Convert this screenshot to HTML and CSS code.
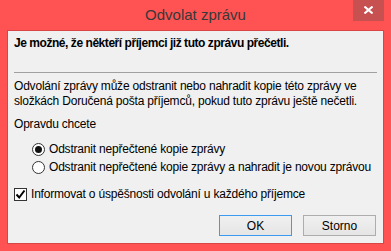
FILE: index.html
```html
<!DOCTYPE html>
<html lang="cs">
<head>
    <meta charset="UTF-8">
    <title>Odvolat zprávu</title>
    <link rel="stylesheet" href="styles.css">
</head>
<body>
    <div class="window">
        <div class="titlebar">
            <span></span>
            <span class="title">Odvolat zprávu</span>
            <button class="close" aria-label="Zavřít">
                <svg width="9" height="8" viewBox="0 0 9 8">
                    <path d="M0.5 0.5 L8.5 7.5 M8.5 0.5 L0.5 7.5" stroke="#fff" stroke-width="2"/>
                </svg>
            </button>
        </div>
        <div class="content">
            <p class="warning">Je možné, že někteří příjemci již tuto zprávu přečetli.</p>
            <hr class="separator">
            <p class="info">Odvolání zprávy může odstranit nebo nahradit kopie této zprávy ve<br>složkách Doručená pošta příjemců, pokud tuto zprávu ještě nečetli.</p>
            <p class="question">Opravdu chcete</p>

            <div class="options">
                <label class="option"><span class="radio checked"></span>Odstranit nepřečtené kopie zprávy</label>
                <label class="option"><span class="radio"></span>Odstranit nepřečtené kopie zprávy a nahradit je novou zprávou</label>
            </div>

            <label class="check-row">
                <span class="checkbox">
                    <svg width="11" height="11" viewBox="0 0 11 11">
                        <path d="M1.5 5.5 L4.2 8.5 L9.5 1.5" fill="none" stroke="#000" stroke-width="2"/>
                    </svg>
                </span>
                Informovat o úspěšnosti odvolání u každého příjemce
            </label>

            <div class="buttons">
                <button class="btn default">OK</button>
                <button class="btn">Storno</button>
            </div>
        </div>
    </div>
</body>
</html>
```

FILE: styles.css
```css
* {
    margin: 0;
    padding: 0;
    box-sizing: border-box;
}
body {
    font-family: 'Liberation Sans', Arial, sans-serif;
    font-size: 12px;
    letter-spacing: -0.2px;
    color: #000;
    background: #fff;
}
.window {
    width: 391px;
    height: 251px;
    overflow: hidden;
    background: #ff5353;
    padding: 0 7px 7px 7px;
    display: flex;
    flex-direction: column;
}
.titlebar {
    height: 30px;
    flex: none;
    display: grid;
    grid-template-columns: 1fr auto 1fr;
    align-items: start;
}
.title {
    font-size: 15px;
    letter-spacing: 0;
    color: #383838;
    line-height: 30px;
}
.close {
    justify-self: end;
    width: 31px;
    height: 21px;
    border: none;
    background: #c75050;
    display: flex;
    align-items: center;
    justify-content: center;
    padding-bottom: 2px;
}
.content {
    flex: 1;
    width: 100%;
    overflow: hidden;
    background: #f0f0f0;
    border: 1px solid #d84545;
    padding: 5px 6px 0 6px;
    line-height: 15px;
    white-space: nowrap;
}
.warning {
    font-weight: bold;
    letter-spacing: -0.45px;
}
.separator {
    border: none;
    border-top: 1px solid #a0a0a0;
    margin: 21px 0 0 0;
}
.info {
    margin-top: 6px;
}
.question {
    margin-top: 8px;
}
.options {
    margin-top: 10px;
    padding-left: 18px;
    display: flex;
    flex-direction: column;
    gap: 3px;
}
.option, .check-row {
    display: flex;
    align-items: center;
    gap: 4px;
    height: 15px;
}
.radio {
    width: 13px;
    height: 13px;
    flex: none;
    border: 1px solid #333;
    border-radius: 50%;
    background: #fff;
    display: flex;
    align-items: center;
    justify-content: center;
}
.radio.checked::after {
    content: "";
    width: 7px;
    height: 7px;
    border-radius: 50%;
    background: #111;
}
.check-row {
    margin-top: 12px;
}
.checkbox {
    width: 13px;
    height: 13px;
    flex: none;
    border: 1px solid #333;
    background: #fff;
    display: flex;
    align-items: center;
    justify-content: center;
}
.buttons {
    display: flex;
    justify-content: flex-end;
    gap: 11px;
    margin-top: 13px;
    padding-right: 1px;
}
.btn {
    width: 73px;
    height: 21px;
    font-family: inherit;
    font-size: 12px;
    border: 1px solid #adadad;
    background: linear-gradient(#f0f0f0, #e5e5e5);
    color: #000;
}
.btn.default {
    border-color: #3c9af0;
}
```
